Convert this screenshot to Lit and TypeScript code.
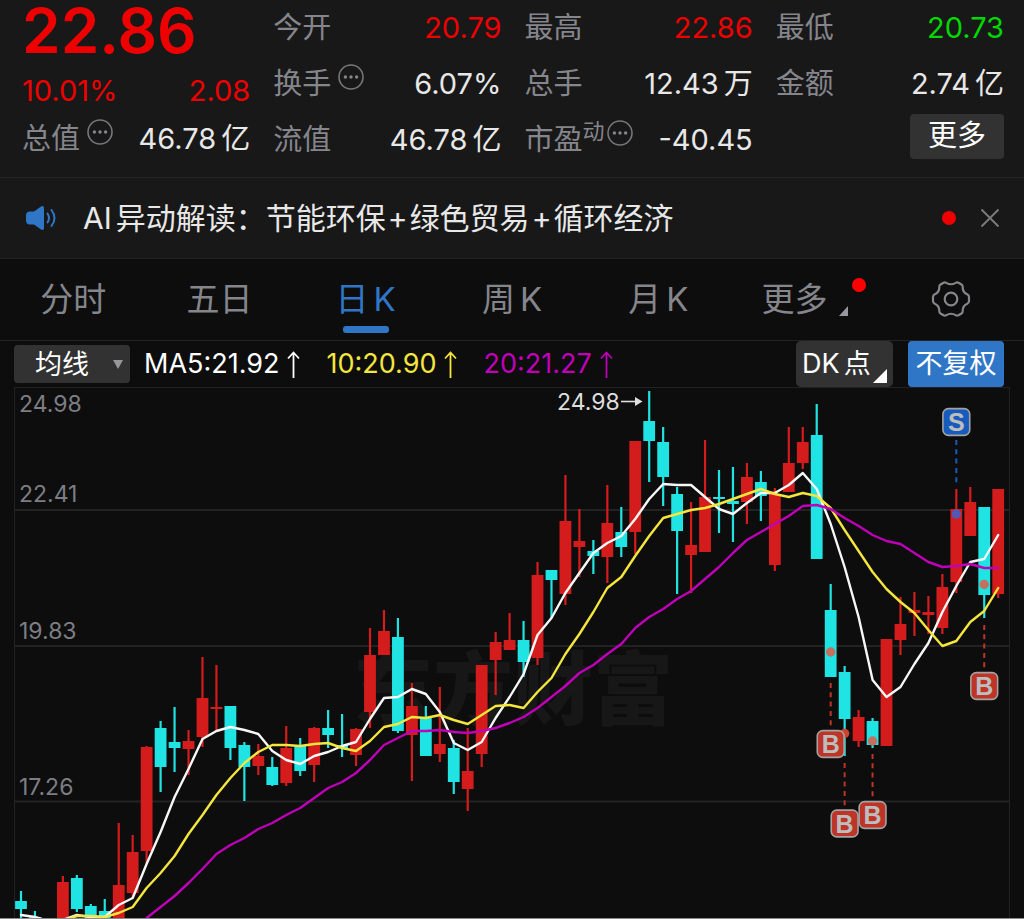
import { LitElement, html, svg, css } from "lit";
import { customElement, property, state } from "lit/decorators.js";

type Candle = [bodyTop: number, bodyBottom: number, high: number, low: number, rising: 0 | 1];

const FIRST_X = 21;
const STEP = 13.96;
const xAt = (i: number) => FIRST_X + i * STEP;

const CANDLES: Candle[] = [
  [901, 909, 891, 919, 0], [917, 919, 911, 919, 0], [919, 920, 919, 920, 1], [882, 919, 876, 919, 1],
  [878, 909, 875, 912, 0], [906, 919, 904, 919, 0], [911, 919, 899, 919, 0], [885, 919, 823, 919, 1],
  [852, 893, 835, 899, 1], [747, 851, 746, 863, 1], [728, 767, 721, 792, 0], [742, 748, 707, 772, 0],
  [741, 749, 730, 775, 1], [698, 737, 657, 747, 1], [707, 709, 665, 731, 1], [706, 748, 706, 760, 0],
  [745, 767, 742, 801, 0], [756, 766, 744, 775, 1], [767, 785, 757, 786, 0], [748, 783, 726, 786, 1],
  [746, 771, 738, 776, 0], [728, 765, 727, 782, 1], [728, 735, 710, 748, 0], [745, 748, 714, 757, 0],
  [729, 755, 728, 766, 1], [655, 712, 628, 728, 1], [631, 655, 610, 655, 1], [637, 731, 618, 733, 0],
  [706, 735, 683, 781, 1], [717, 756, 706, 756, 0], [744, 754, 687, 762, 1], [748, 782, 740, 794, 0],
  [771, 789, 728, 811, 1], [665, 754, 665, 767, 1], [642, 660, 632, 695, 1], [640, 650, 613, 650, 1],
  [640, 662, 621, 677, 0], [575, 658, 562, 665, 1], [570, 580, 570, 618, 0], [521, 594, 475, 605, 1],
  [541, 547, 509, 577, 1], [551, 556, 540, 574, 0], [523, 557, 485, 583, 1], [532, 547, 507, 557, 0],
  [441, 532, 441, 554, 1], [421, 441, 391, 482, 0], [442, 477, 427, 506, 0], [494, 531, 487, 594, 0],
  [545, 555, 502, 593, 1], [497, 552, 440, 552, 1], [497, 499, 470, 533, 0], [501, 504, 467, 542, 0],
  [477, 502, 463, 524, 1], [482, 496, 471, 521, 0], [494, 565, 488, 571, 1], [463, 492, 427, 492, 1],
  [442, 463, 427, 469, 1], [435, 559, 404, 559, 0], [610, 677, 584, 677, 0], [672, 719, 666, 756, 0],
  [717, 741, 710, 747, 1], [721, 745, 718, 748, 0], [639, 746, 639, 746, 1], [624, 640, 597, 655, 1],
  [610, 613, 592, 636, 1], [612, 615, 596, 634, 1], [587, 628, 574, 634, 1], [509, 582, 489, 593, 1],
  [502, 536, 487, 536, 1], [507, 595, 507, 618, 0], [489, 594, 489, 598, 1],
];

const MA5 = [
  915, 917, 921, 920, 915, 917, 917, 905, 898, 864, 832, 797, 769, 739, 731, 727, 730, 734, 751, 760, 764, 756,
  752, 746, 742, 719, 698, 697, 689, 694, 712, 743, 750, 742, 718, 697, 674, 635, 618, 593, 573, 553, 543, 536, 519,
  499, 484, 485, 485, 497, 509, 514, 503, 493, 493, 485, 473, 489, 524, 567, 617, 680, 697, 687, 664, 643, 612, 586,
  562, 559, 535,
];
const MA10 = [
  921, 916, 916, 917, 913, 907, 888, 873, 856, 834, 815, 795, 778, 763, 752, 745, 745, 746, 744, 743, 748, 751, 741,
  727, 724, 717, 718, 715, 720, 724, 715, 706, 705, 708, 692, 678, 654, 634, 612, 588, 577, 556, 536, 518, 514, 510,
  508, 504, 499, 494, 489, 494, 497, 493, 496, 508, 530, 551, 572, 589, 602, 613, 630, 646, 641, 622, 611, 588,
];
const MA20 = [
  918, 907, 896, 883, 869, 854, 845, 838, 829, 823, 815, 808, 798, 788, 782, 773, 760, 745, 738, 731, 731, 730, 732,
  733, 731, 728, 723, 717, 708, 697, 686, 673, 665, 654, 644, 628, 617, 609, 599, 591, 579, 567, 553, 540, 532, 524,
  516, 506, 505, 509, 518, 526, 535, 541, 544, 553, 562, 567, 566, 564, 568, 568,
];

/** Averages are right-aligned: every series ends on the newest candle. */
const linePoints = (values: number[]) => {
  const start = CANDLES.length - values.length;
  return values.map((y, i) => `${xAt(i + start).toFixed(1)},${y}`).join(" ");
};

@customElement("kline-chart")
export class KlineChart extends LitElement {
  static styles = css`
    :host { display: block; }
    .plot { display: block; width: 100%; height: auto; overflow: hidden; }
    .grid { stroke: #222224; stroke-width: 2; fill: none; }
    .frame { stroke: #222224; stroke-width: 1; fill: none; }
    .bottom { stroke: #8b8b8d; stroke-width: 1; }
    .axis { fill: #7d7d84; font: 400 23px Inter, "Liberation Sans", sans-serif; }
    .peak { fill: #dedede; font: 400 23px Inter, "Liberation Sans", sans-serif; }
    .watermark { fill: #171717; font: 900 80px "Noto Sans CJK SC", sans-serif; }
    .up { fill: #d51c1c; }
    .down { fill: #20e3e3; }
    .ma { fill: none; stroke-width: 2.4; stroke-linejoin: round; stroke-linecap: round; }
    .ma5 { stroke: #f7f7f7; }
    .ma10 { stroke: #f4e63c; }
    .ma20 { stroke: #bf00b8; }
    .badge { stroke: #a3a3a3; stroke-width: 1.6; }
    .buy { fill: #be3426; }
    .sell { fill: #175cbc; }
    .letter { fill: #bdbdbd; font: 700 25px "Liberation Sans", Arial, sans-serif; text-anchor: middle; }
    .lead { stroke-width: 2; stroke-dasharray: 5 4.3; }
    .lead-buy { stroke: #be3426; }
    .lead-sell { stroke: #175cbc; }
    .spot-buy { fill: #c4705f; }
    .spot-hot { fill: #cf432d; }
    .spot-sell { fill: #5358b8; }
  `;

  private candle([top, bottom, high, low, rising]: Candle, i: number) {
    const x = xAt(i);
    return svg`<g class=${rising ? "up" : "down"}>
      <rect x=${x - 1.1} y=${high} width="2.2" height=${low - high}></rect>
      <rect x=${x - 5.9} y=${top} width="11.8" height=${bottom - top}></rect>
    </g>`;
  }

  private signal(i: number, y: number, letter: "B" | "S", from: number, spotY: number, spot: string) {
    const x = xAt(i);
    const buy = letter === "B";
    return svg`<g>
      <circle class=${spot} cx=${x} cy=${spotY} r="4.7"></circle>
      <line class="lead ${buy ? "lead-buy" : "lead-sell"}" x1=${x} x2=${x} y1=${from} y2=${from + 43}></line>
      <rect class="badge ${buy ? "buy" : "sell"}" x=${x - 13.4} y=${y - 13.4} width="26.8" height="26.8" rx="5.5"></rect>
      <text class="letter" x=${x} y=${y + 9}>${letter}</text>
    </g>`;
  }

  render() {
    return html`<svg class="plot" viewBox="0 387 1024 532" role="img" aria-label="日K线图">
      <text class="watermark" x="353" y="718">东方财富</text>
      <path class="frame" d="M14.5 919V387.5H1009.5V919"></path>
      <path class="grid" d="M15 510H1009M15 646H1009M15 801.5H1009"></path>
      ${CANDLES.map((c, i) => this.candle(c, i))}
      <polyline class="ma ma5" points=${linePoints(MA5)}></polyline>
      <polyline class="ma ma10" points=${linePoints(MA10)}></polyline>
      <polyline class="ma ma20" points=${linePoints(MA20)}></polyline>
      <text class="axis" x="19" y="412">24.98</text>
      <text class="axis" x="19" y="502">22.41</text>
      <text class="axis" x="19" y="639">19.83</text>
      <text class="axis" x="19" y="795">17.26</text>
      <text class="peak" x="557" y="410">24.98</text>
      <path d="M621 401.5H637" stroke="#dedede" stroke-width="1.6"></path>
      <path d="M635 397L642.500 401.500L635 406Z" fill="#dedede"></path>
      ${this.signal(67, 422, "S", 440, 514, "spot-sell")}
      ${this.signal(69, 686, "B", 625, 584.5, "spot-buy")}
      ${this.signal(59, 823.5, "B", 763, 733.5, "spot-hot")}
      ${this.signal(58, 744, "B", 683, 652, "spot-buy")}
      ${this.signal(61, 815, "B", 754, 741, "spot-buy")}
      <path class="bottom" d="M0 918.500H1024"></path>
    </svg>`;
  }
}

@customElement("quote-cell")
export class QuoteCell extends LitElement {
  static styles = css`
    :host { display: flex; align-items: center; justify-content: space-between; height: 56px; white-space: nowrap; }
    .label { display: flex; align-items: center; color: #85858c; }
    .value { color: #e8e8e8; }
    .unit { margin-left: 5px; }
    .rise { color: #ee0000; }
    .fall { color: #00d800; }
    .sup { align-self: flex-start; font-size: 22px; line-height: 22px; }
    .info { align-self: flex-start; display: block; width: 26px; height: 26px; margin-left: 7px; }
    .sup + .info { margin-left: 2px; }
  `;
  @property() label = "";
  @property() sup = "";
  @property() value = "";
  @property() unit = "";
  @property() tone = "";
  @property({ type: Boolean }) info = false;

  render() {
    return html`
      <span class="label">${this.label}${this.sup ? html`<span class="sup">${this.sup}</span>` : ""}${this.info
        ? html`<svg class="info" viewBox="0 0 26 26" aria-hidden="true">
            <circle cx="13" cy="13" r="12" fill="none" stroke="#77777b" stroke-width="1.6"></circle>
            <circle cx="7.400" cy="13" r="1.700" fill="#85858c"></circle>
            <circle cx="13" cy="13" r="1.700" fill="#85858c"></circle>
            <circle cx="18.600" cy="13" r="1.700" fill="#85858c"></circle>
          </svg>`
        : ""}</span>
      <span class="value ${this.tone}">${this.value}${this.unit ? html`<span class="unit">${this.unit}</span>` : ""}</span>
    `;
  }
}

const TABS: [string, string][] = [["分时", ""], ["五日", ""], ["日", "K"], ["周", "K"], ["月", "K"], ["更多", ""]];

@customElement("app-root")
export class AppRoot extends LitElement {
  static styles = css`
    :host {
      display: block;
      background: #0d0d0d;
      color: #e8e8e8;
      font: 400 29px/40px Inter, "Noto Sans CJK SC", sans-serif;
    }
    * { box-sizing: border-box; }
    button, select {
      margin: 0; padding: 0; border: 0; background: none; color: inherit; font: inherit; cursor: pointer;
      appearance: none;
    }
    .quote {
      display: grid; grid-template-columns: repeat(4, 1fr); column-gap: 23px;
      padding: 0 20px 9px 22px; background: #181818; border-bottom: 1px solid #242424;
    }
    .column { min-width: 0; }
    .price { height: 66px; font-size: 62px; line-height: 62px; font-weight: 600; color: #ee0000; }
    .change { display: flex; justify-content: space-between; height: 45px; line-height: 50px; color: #ee0000; }
    .more-row { display: flex; justify-content: flex-end; align-items: center; height: 48px; }
    .more { width: 94px; height: 45px; border-radius: 4px; background: #323232; color: #fff; }
    .notice {
      display: flex; align-items: center; height: 81px; padding: 0 24px 0 26px;
      background: #181818; border-bottom: 1px solid #232323; font-size: 30px;
    }
    .speaker { width: 31px; height: 26px; margin-right: 26px; }
    .notice-text { flex: 1; min-width: 0; overflow: hidden; white-space: nowrap; text-overflow: ellipsis; }
    .ai { margin-right: 4px; }
    .plus { margin: 0 2px; }
    .dot { width: 14px; height: 14px; border-radius: 50%; background: #ee0000; }
    .close { display: flex; width: 20px; height: 20px; margin-left: 24px; }
    .close svg { width: 20px; height: 20px; }
    .tabs {
      display: grid; grid-template-columns: repeat(7, 1fr); height: 82px; border-bottom: 1px solid #232323;
      font-size: 33px; color: #85858c;
    }
    .tab { position: relative; display: flex; gap: 5px; align-items: center; justify-content: center; padding-bottom: 2px; }
    .active { color: #3076c6; }
    .active::after {
      content: ""; position: absolute; bottom: 7px; width: 46px; height: 7px; border-radius: 3px; background: #3076c6;
    }
    .corner { align-self: flex-end; width: 9px; height: 10px; margin: 0 0 22px 6px; }
    .new { position: absolute; top: 19px; right: 12px; width: 14px; height: 14px; border-radius: 50%; background: #ff0000; }
    .gear { width: 40px; height: 40px; }
    .indicators {
      display: flex; align-items: center; height: 46px; padding: 0 20px 0 14px;
      font-size: 27px; color: #fff; white-space: nowrap;
    }
    .picker { display: grid; align-items: center; width: 116px; height: 38px; margin-right: 14px; }
    .picker select {
      grid-area: 1 / 1; width: 100%; height: 38px; padding-left: 21px; border-radius: 4px; background: #323232; color: #fff;
    }
    .picker svg { grid-area: 1 / 1; justify-self: end; width: 10px; height: 9px; margin-right: 7px; pointer-events: none; }
    .averages { display: flex; flex: 1; gap: 26px; }
    .average { display: flex; align-items: center; gap: 8px; }
    .average svg { width: 13px; height: 27px; }
    .ten { color: #f4e63c; }
    .twenty { color: #c000b9; }
    .dk {
      position: relative; display: flex; align-items: center; gap: 4px; width: 97px; height: 46px; padding-left: 6px;
      border-radius: 5px; background: #323232;
    }
    .dk svg { position: absolute; right: 6px; bottom: 4px; width: 14px; height: 14px; }
    .adjust { width: 96px; height: 46px; margin-left: 15px; border-radius: 4px; background: #3076c6; }
  `;

  @state() private tab = 2;

  private arrow() {
    return html`<svg viewBox="0 0 13 27" fill="none" stroke="currentColor" stroke-width="1.800" aria-hidden="true">
      <path d="M6.500 27V1.500M1 7.500L6.500 1.500L12 7.500"></path>
    </svg>`;
  }

  render() {
    return html`
      <header class="quote">
        <div class="column">
          <div class="price">22.86</div>
          <div class="change"><span>10.01%</span><span>2.08</span></div>
          <quote-cell label="总值" value="46.78" unit="亿" info></quote-cell>
        </div>
        <div class="column">
          <quote-cell label="今开" value="20.79" tone="rise"></quote-cell>
          <quote-cell label="换手" value="6.07%" info></quote-cell>
          <quote-cell label="流值" value="46.78" unit="亿"></quote-cell>
        </div>
        <div class="column">
          <quote-cell label="最高" value="22.86" tone="rise"></quote-cell>
          <quote-cell label="总手" value="12.43" unit="万"></quote-cell>
          <quote-cell label="市盈" sup="动" value="-40.45" info></quote-cell>
        </div>
        <div class="column">
          <quote-cell label="最低" value="20.73" tone="fall"></quote-cell>
          <quote-cell label="金额" value="2.74" unit="亿"></quote-cell>
          <div class="more-row"><button class="more" type="button">更多</button></div>
        </div>
      </header>

      <section class="notice">
        <svg class="speaker" viewBox="0 0 31 26" fill="none" stroke="#3076c6" stroke-width="2" stroke-linecap="round" aria-hidden="true">
          <path d="M4 6.500H8L15 1.500Q18 0 18 3V23Q18 26 15 24.500L8 19.500H4Q0 19.500 0 15.500V10.500Q0 6.500 4 6.500Z" fill="#3076c6" stroke="none"></path>
          <path d="M21.500 8.500Q24.500 13 21.500 17.500M25.500 5Q31.500 13 25.500 21"></path>
        </svg>
        <span class="notice-text"><span class="ai">AI</span>异动解读：节能环保<span class="plus">+</span>绿色贸易<span class="plus">+</span>循环经济</span>
        <span class="dot"></span>
        <button class="close" type="button" aria-label="关闭">
          <svg viewBox="0 0 20 20" stroke="#7c7c80" stroke-width="1.800" aria-hidden="true"><path d="M1.500 1.500L18.500 18.500M18.500 1.500L1.500 18.500"></path></svg>
        </button>
      </section>

      <nav class="tabs">
        ${TABS.map(
          ([name, latin], i) => html`<button type="button" class="tab ${i === this.tab ? "active" : ""}" @click=${() => (this.tab = i)}><span>${name}</span>${latin ? html`<span>${latin}</span>` : ""}${i === 5
            ? html`<svg class="corner" viewBox="0 0 9 10" aria-hidden="true"><path d="M9 0V10H0Z" fill="#98989e"></path></svg><span class="new"></span>`
            : ""}</button>`
        )}
        <button type="button" class="tab" aria-label="设置">
          <svg class="gear" viewBox="0 0 40 40" fill="none" stroke="#85858c" stroke-width="2.200" stroke-linejoin="round" aria-hidden="true">
            <path d="M12.500 3.700Q14 3 15.300 3.900Q20 6.600 24.700 3.900Q26 3 27.500 3.700L30.500 5.500Q31.800 6.300 31.700 8Q31.500 13.200 36.200 15.300Q38 16.200 38 18V22Q38 23.800 36.200 24.700Q31.500 26.800 31.700 32Q31.800 33.700 30.500 34.500L27.500 36.300Q26 37 24.700 36.100Q20 33.400 15.300 36.100Q14 37 12.500 36.300L9.500 34.500Q8.200 33.700 8.300 32Q8.500 26.800 3.800 24.700Q2 23.800 2 22V18Q2 16.200 3.800 15.300Q8.500 13.200 8.300 8Q8.200 6.300 9.500 5.500Z"></path>
            <circle cx="20" cy="20" r="6.300"></circle>
          </svg>
        </button>
      </nav>

      <div class="indicators">
        <div class="picker">
          <select aria-label="指标"><option>均线</option></select>
          <svg viewBox="0 0 10 9" aria-hidden="true"><path d="M0 0H10L5 9Z" fill="#96969c"></path></svg>
        </div>
        <div class="averages">
          <span class="average">MA5:21.92${this.arrow()}</span>
          <span class="average ten">10:20.90${this.arrow()}</span>
          <span class="average twenty">20:21.27${this.arrow()}</span>
        </div>
        <button class="dk" type="button"><span>DK</span><span>点</span><svg viewBox="0 0 14 14" aria-hidden="true"><path d="M14 0V14H0Z" fill="#fff"></path></svg></button>
        <button class="adjust" type="button">不复权</button>
      </div>

      <kline-chart></kline-chart>
    `;
  }
}
